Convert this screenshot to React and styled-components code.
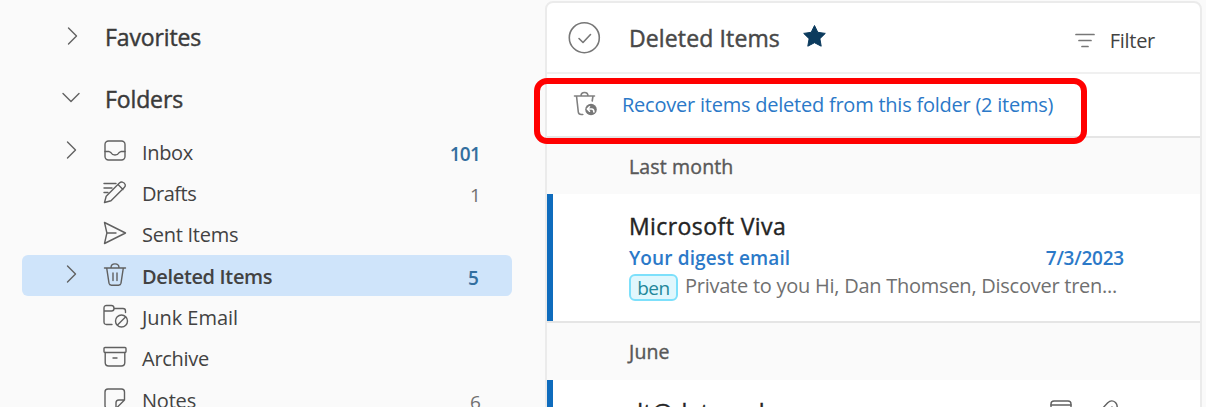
import React from "react";
import styled, { createGlobalStyle } from "styled-components";

const GlobalStyle = createGlobalStyle`
  * { box-sizing: border-box; }
  body { margin: 0; overflow: hidden; background: #fafafa; }
`;

const Page = styled.div`
  position: relative;
  display: flex;
  width: 1206px;
  height: 407px;
  overflow: hidden;
  background: #fafafa;
  color: #424242;
  font-family: "Open Sans", "Noto Sans", sans-serif;
  white-space: nowrap;
`;

const Sidebar = styled.nav`
  width: 545px;
  flex: none;
  padding: 6px 33px 0 22px;
`;

const SectionRow = styled.div`
  display: grid;
  grid-template-columns: 82px 1fr;
  align-items: center;
  height: 62.5px;
  padding-left: 1px;
  font-size: 23px;
  letter-spacing: -0.12px;
  -webkit-text-stroke: 0.45px currentColor;
  color: #3a3a3a;
`;

const SectionLabel = styled.span`
  padding-bottom: 1px;
`;

const FolderRow = styled.div`
  display: grid;
  grid-template-columns: 81px 39px 1fr auto;
  align-items: center;
  height: 41.35px;
  padding-right: ${(p) => (p.$selected ? 34 : 32)}px;
  border-radius: 6px;
  background: ${(p) => (p.$selected ? "#cfe4fa" : "transparent")};
  font-size: 20px;
  font-weight: ${(p) => (p.$selected ? 600 : 400)};
  letter-spacing: ${(p) => p.$track || 0}px;
  color: #424242;
`;

const FolderLabel = styled.span`
  padding-top: 1px;
`;

const Count = styled.span`
  padding-top: 4px;
  font-size: 19px;
  letter-spacing: -0.8px;
  font-weight: ${(p) => (p.$strong ? 600 : 400)};
  color: ${(p) => (p.$strong ? "#336f9f" : "#707070")};
`;

const Glyph = styled.svg`
  display: block;
  overflow: visible;
  fill: none;
  stroke: ${(p) => p.$tone || "#606060"};
  stroke-width: ${(p) => p.$weight || 1.4};
  stroke-linecap: round;
  stroke-linejoin: round;
`;

const ChevronCell = styled.span`
  padding: 0 0 3px 40px;
`;

const IconCell = styled.span`
  padding-bottom: 2px;
`;

const Panel = styled.main`
  width: 657px;
  height: 420px;
  flex: none;
  margin-top: 1px;
  border: 2px solid #ebebeb;
  border-radius: 8px 8px 0 0;
  background: #fff;
  overflow: hidden;
`;

const PanelHeader = styled.header`
  display: flex;
  align-items: center;
  height: 71px;
  padding: 0 45px 0 20px;
  border-bottom: 2px solid #f0f0f0;
`;

const PanelTitle = styled.h1`
  margin: 1px 22px 0 28px;
  font-size: 23px;
  font-weight: 400;
  letter-spacing: 0.13px;
  -webkit-text-stroke: 0.45px currentColor;
  color: #484848;
`;

const Star = styled.svg`
  display: block;
  margin-bottom: 3px;
`;

const FilterButton = styled.div`
  display: flex;
  align-items: center;
  gap: 15px;
  margin-left: auto;
  padding-top: 6px;
  font-size: 20px;
  letter-spacing: -0.3px;
`;

const RecoverBar = styled.div`
  display: flex;
  align-items: center;
  gap: 24px;
  height: 64px;
  padding: 0 0 2px 26px;
  border-bottom: 2px solid #e5e5e5;
`;

const RecoverLink = styled.a`
  padding-top: 1px;
  font-size: 20px;
  letter-spacing: -0.23px;
  color: #2b79c8;
`;

const GroupHeader = styled.div`
  display: flex;
  align-items: center;
  height: ${(p) => p.$height}px;
  padding: 0 0 0 82px;
  background: #fafafa;
  font-size: 19.5px;
  letter-spacing: 0.15px;
  -webkit-text-stroke: 0.4px currentColor;
  color: #585858;
`;

const Message = styled.article`
  height: 129px;
  padding: 16px 76px 0;
  border-bottom: 2px solid #e5e5e5;
  background: linear-gradient(#0f6cbd, #0f6cbd) 0 0 / 6px 100% no-repeat #fff;
`;

const MessageLine = styled.div`
  display: flex;
  align-items: center;
  justify-content: space-between;
  height: ${(p) => p.$height}px;
  padding-left: 6px;
`;

const Sender = styled.span`
  padding-bottom: 1px;
  font-size: 23px;
  letter-spacing: 0.42px;
  -webkit-text-stroke: 0.4px currentColor;
  color: #242424;
`;

const Subject = styled.span`
  padding-top: 1px;
  font-size: 19px;
  font-weight: 600;
  letter-spacing: ${(p) => p.$track}px;
  color: #2b79c8;
`;

const PreviewLine = styled.div`
  display: flex;
  align-items: center;
  gap: 7px;
  height: 30px;
  padding-left: 6px;
`;

const Tag = styled.span`
  display: flex;
  align-items: center;
  justify-content: center;
  width: 49px;
  height: 27px;
  margin-top: 3px;
  border: 2px solid #7de0fb;
  border-radius: 6px;
  background: #e0f7fd;
  font-size: 19px;
  letter-spacing: -0.4px;
  color: #23879a;
`;

const Preview = styled.span`
  padding-bottom: 1px;
  font-size: 20px;
  letter-spacing: -0.25px;
  color: #707070;
`;

const Attachments = styled.span`
  display: flex;
  gap: 29px;
  padding: 0 4px 6px 0;
`;

const Highlight = styled.div`
  position: absolute;
  left: 534px;
  top: 78px;
  width: 553px;
  height: 66px;
  border: 6px solid #f00;
  border-radius: 13px;
`;

const Chevron = ({ down }) => (
  <Glyph width="18" height="18" viewBox="0 0 18 18">
    <path d={down ? "M0 4.5l8 8 8-8" : "M5.5 1l8 8-8 8"} />
  </Glyph>
);

const shapes = {
  inbox: (
    <>
      <rect x="2" y="2" width="20" height="19" rx="3.5" />
      <path d="M2 12.5h4l2 1.2q1.2 2.3 4 2.3t4-2.3l2-1.2h4" />
    </>
  ),
  drafts: (
    <>
      <path d="M1 3.5h12M1 8h8M1 12.5h4" />
      <path d="M1.5 22.5l1.7-6.2L16.4 3.1q1.4-1.4 3-1 2.4.6 2.9 2.7.2 1.5-1 2.7L8 20.8zM15 4.5l5 5" />
    </>
  ),
  sent: <path d="M1.5 1.5L22.5 12 1.5 22.5l2.4-10.5zM4 12h9" />,
  deleted: (
    <path d="M1.5 5h21M8 4.7q0-3.8 4-3.8t4 3.8M3.7 5.2l2.3 15q.4 2 2.4 2h7.2q2 0 2.4-2l2.3-15M10 10v7.5M14 10v7.5" />
  ),
  junk: (
    <>
      <path d="M9 20.5H3.5q-2.5 0-2.5-2.5V4q0-2.5 2.5-2.5h5q2.5 0 2.5 3h9q2.5 0 2.5 2.5v1.5M1 7h7.5q2.5 0 2.5-2.5" />
      <circle cx="18.5" cy="17" r="6" />
      <path d="M14.5 21l8-8" />
    </>
  ),
  archive: (
    <>
      <rect x="1" y="2.5" width="22" height="5" rx="1" />
      <path d="M2.2 7.5V17.5q0 3.5 3.5 3.5h12.6q3.5 0 3.5-3.5V7.5M10 13h4" />
    </>
  ),
  notes: (
    <path d="M13 21.5H5q-3 0-3-3V5q0-3 3-3h13.5q3 0 3 3v8zM21.5 13h-5.7q-2.8 0-2.8 2.8v5.7" />
  ),
};

const FolderIcon = ({ name }) => (
  <Glyph width="24" height="24" viewBox="0 0 24 24">{shapes[name]}</Glyph>
);

const folders = [
  { icon: "inbox", label: "Inbox", count: "101", strong: true, chevron: true, track: -0.35 },
  { icon: "drafts", label: "Drafts", count: "1", track: -0.5 },
  { icon: "sent", label: "Sent Items", track: -0.25 },
  { icon: "deleted", label: "Deleted Items", count: "5", strong: true, chevron: true, selected: true, track: -0.35 },
  { icon: "junk", label: "Junk Email", track: -0.05 },
  { icon: "archive", label: "Archive", track: -0.27 },
  { icon: "notes", label: "Notes", count: "6", track: -0.2 },
];

const Section = ({ label, open }) => (
  <SectionRow>
    <ChevronCell><Chevron down={open} /></ChevronCell>
    <SectionLabel>{label}</SectionLabel>
  </SectionRow>
);

export default function App() {
  return (
    <Page>
      <GlobalStyle />
      <Sidebar>
        <Section label="Favorites" />
        <Section label="Folders" open />
        {folders.map((f) => (
          <FolderRow key={f.label} $selected={f.selected} $track={f.track}>
            <ChevronCell>{f.chevron && <Chevron />}</ChevronCell>
            <IconCell><FolderIcon name={f.icon} /></IconCell>
            <FolderLabel>{f.label}</FolderLabel>
            {f.count && <Count $strong={f.strong}>{f.count}</Count>}
          </FolderRow>
        ))}
      </Sidebar>
      <Panel>
        <PanelHeader>
          <Glyph $tone="#777" $weight={1.6} width="34" height="34" viewBox="0 0 34 34">
            <circle cx="17.3" cy="16.7" r="15" />
            <path d="M12 17.5l4 4 7.5-8" />
          </Glyph>
          <PanelTitle>Deleted Items</PanelTitle>
          <Star width="25" height="24" viewBox="0 0 25 24">
            <path d="M12.5 1.5l3.3 6.8 7.5 1.1-5.4 5.3 1.3 7.5-6.7-3.5-6.7 3.5 1.3-7.5-5.4-5.3 7.5-1.1z" fill="#0c3b5e" stroke="#0c3b5e" strokeLinejoin="round" />
          </Star>
          <FilterButton>
            <Glyph $tone="#777" $weight={1.7} width="20" height="16" viewBox="0 0 20 16">
              <path d="M1 1.5h18M4 7.5h12M7 13.5h6" />
            </Glyph>
            Filter
          </FilterButton>
        </PanelHeader>
        <RecoverBar>
          <Glyph $tone="#808080" $weight={1.6} width="25" height="26" viewBox="0 0 25 26">
            <path d="M1.5 5h20M8 5q0-3.5 3.5-3.5T15 5M3.5 5l1.8 16q.3 2.5 3 2.5h1.5M20 5l-.8 5" />
            <circle cx="18" cy="18.5" r="5.8" fill="#777" stroke="none" />
            <path d="M14.5 18h4.2q2.2 0 2.2 3M16.5 15.8l-2.2 2.2 2.2 2.2" stroke="#fff" />
          </Glyph>
          <RecoverLink>Recover items deleted from this folder (2 items)</RecoverLink>
        </RecoverBar>
        <GroupHeader $height={56}>Last month</GroupHeader>
        <Message>
          <MessageLine $height={33}><Sender>Microsoft Viva</Sender></MessageLine>
          <MessageLine $height={28}>
            <Subject $track={0.13}>Your digest email</Subject>
            <Subject $track={-0.22}>7/3/2023</Subject>
          </MessageLine>
          <PreviewLine>
            <Tag>ben</Tag>
            <Preview>Private to you Hi, Dan Thomsen, Discover tren...</Preview>
          </PreviewLine>
        </Message>
        <GroupHeader $height={57}>June</GroupHeader>
        <Message>
          <MessageLine $height={33}>
            <Sender>dt@dataned</Sender>
            <Attachments>
              <Glyph width="20" height="20" viewBox="0 0 20 20"><rect x="0" y="1" width="20" height="18" rx="3" /><path d="M0 5h20" /></Glyph>
              <Glyph width="20" height="20" viewBox="0 0 20 20"><path d="M1 10l6.5-7q4-4 8-.5 3.5 4-.3 8L8 18M5 14l7-7" /></Glyph>
            </Attachments>
          </MessageLine>
        </Message>
      </Panel>
      <Highlight />
    </Page>
  );
}
